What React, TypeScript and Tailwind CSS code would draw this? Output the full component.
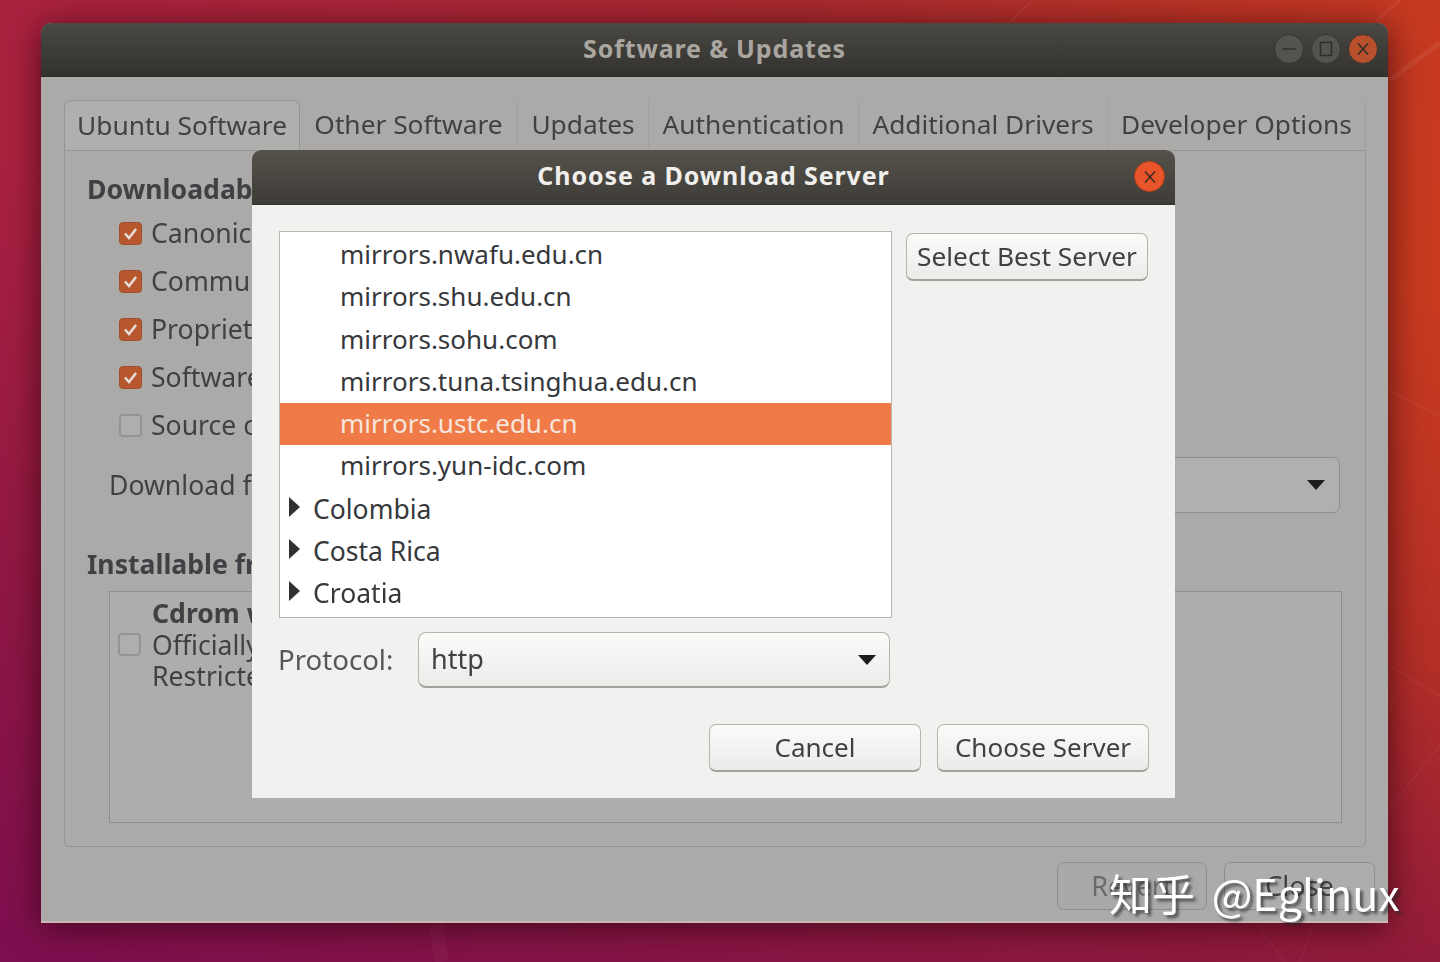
import React from "react";

const font = { fontFamily: '"Noto Sans", "Noto Sans CJK SC", sans-serif' };

function Check({ on }: { on?: boolean }) {
  return on ? (
    <span className="flex h-[23px] w-[23px] items-center justify-center rounded-[4px] border border-[#9c5030] bg-[#b9582f]">
      <svg width="17" height="17" viewBox="0 0 17 17">
        <path d="M3 8.5 L7 13 L14 4" fill="none" stroke="#e6e0db" strokeWidth="2.4" />
      </svg>
    </span>
  ) : (
    <span className="block h-[23px] w-[23px] rounded-[4px] border-2 border-[#949492] bg-[#aeaeac]" />
  );
}

function WinBtn({ kind }: { kind: "min" | "max" | "close" }) {
  const bg = kind === "close" ? "bg-[#b9502d]" : "bg-[#55534e]";
  return (
    <span className={`flex h-[30px] w-[30px] items-center justify-center rounded-full border border-[#36352f] ${bg}`}>
      <svg width="16" height="16" viewBox="0 0 16 16" fill="none" stroke="#2e2d29" strokeWidth="1.5">
        {kind === "min" && <path d="M1.5 8 H14.5" />}
        {kind === "max" && <rect x="2.5" y="1.5" width="11" height="13" />}
        {kind === "close" && <path d="M3 2.5 L13 13.5 M13 2.5 L3 13.5" />}
      </svg>
    </span>
  );
}

function Row({ label, on }: { label: string; on?: boolean }) {
  return (
    <div className="flex h-[48px] items-center gap-[9px] pl-[32px]">
      <Check on={on} />
      <span className="whitespace-nowrap">{label}</span>
    </div>
  );
}

function Caret() {
  return (
    <svg width="18" height="10" viewBox="0 0 18 10">
      <path d="M0 0 H18 L9 10 Z" fill="#1c1c1c" />
    </svg>
  );
}

function Server({ name, selected }: { name: string; selected?: boolean }) {
  return (
    <div className={`flex h-[42.25px] items-center pb-[2px] pl-[60px] text-[26px] ${selected ? "bg-[#f07a48] text-[#f6e6dc]" : ""}`}>{name}</div>
  );
}

function Country({ name }: { name: string }) {
  return (
    <div className="flex h-[42.25px] items-center text-[26.5px]">
      <svg className="ml-[9px] mb-[4px]" width="11" height="20" viewBox="0 0 11 20">
        <path d="M0 0 L11 10 L0 20 Z" fill="#2f3133" />
      </svg>
      <span className="ml-[13px]">{name}</span>
    </div>
  );
}

function DlgButton({ label, className }: { label: string; className: string }) {
  return (
    <div
      className={`flex h-[48px] items-center justify-center rounded-[7px] border border-[#b5b3ae] border-b-[2px] border-b-[#a3a19c] bg-gradient-to-b from-[#fbfbfa] to-[#ecebe9] pb-[2px] ${className}`}
    >
      {label}
    </div>
  );
}

const tabs: [string, string][] = [
  ["Other Software", "w-[218px]"],
  ["Updates", "w-[131px]"],
  ["Authentication", "w-[210px]"],
  ["Additional Drivers", "w-[249px]"],
  ["Developer Options", "w-[258px]"],
];

export default function App() {
  return (
    <div
      className="relative h-[962px] w-[1440px] overflow-hidden bg-[linear-gradient(100deg,#ab2140_0%,#a82a30_50%,#cf3e1c_100%)] text-[27px] leading-[30px] text-[#3f4144]"
      style={font}
    >
      <div className="absolute inset-0 bg-[linear-gradient(to_bottom,transparent_30%,#9e232e_100%)]" />
      <div className="absolute inset-0 bg-[linear-gradient(20deg,#7d0e50_0%,#7d0e5000_55%)]" />
      <svg className="absolute inset-0" width="1440" height="962" viewBox="0 0 1440 962">
        <g fill="none" stroke="#ffffff">
          <path d="M1390 80 L1440 43" strokeOpacity="0.07" strokeWidth="5" />
          <path d="M1388 390 L1440 417" strokeOpacity="0.04" strokeWidth="2" />
          <path d="M1388 665 L1440 696" strokeOpacity="0.04" strokeWidth="2" />
          <path d="M1388 810 L1440 745" strokeOpacity="0.04" strokeWidth="2" />
          <path d="M1010 22 L1033 0" strokeOpacity="0.06" strokeWidth="2" />
          <path d="M1377 20 L1400 0" strokeOpacity="0.06" strokeWidth="3" />
          <path d="M436 925 L442 962" strokeOpacity="0.03" strokeWidth="14" />
          <path d="M1258 925 L1285 962" strokeOpacity="0.04" strokeWidth="2" />
          <path d="M1313 925 L1300 962" strokeOpacity="0.04" strokeWidth="2" />
        </g>
      </svg>

      <div className="blur-[0.5px]">
        {/* main window */}
        <div className="absolute left-[41px] top-[23px] flex h-[900px] w-[1347px] flex-col overflow-hidden rounded-t-[10px] border-b-2 border-[#c9b9b5] bg-[#abaaa9] shadow-[0_4px_34px_rgba(40,0,10,0.7)]">
          <div className="relative flex h-[54px] shrink-0 items-center justify-center border-b border-[#2c2b28] bg-gradient-to-b from-[#4a4843] to-[#33322e] pb-[3px] text-[25px] font-bold tracking-[0.85px] text-[#a9a69f]">
            <span>Software &amp; Updates</span>
            <div className="absolute right-[10px] top-[11px] flex gap-[7px]">
              <WinBtn kind="min" />
              <WinBtn kind="max" />
              <WinBtn kind="close" />
            </div>
          </div>

          <div className="flex flex-1 flex-col pl-[23px] pr-[22px] pt-[23px]">
            <div className="flex h-[50px] shrink-0 pb-[2px] text-[26.3px]">
              <div className="-mb-[2px] flex w-[236px] items-center justify-center rounded-t-[7px] border border-b-0 border-[#949492] bg-[#afafad] pb-[2px]">
                Ubuntu Software
              </div>
              {tabs.map(([t, w]) => (
                <div key={t} className={`flex items-center justify-center border-r border-[#a0a09e] ${w}`}>
                  {t}
                </div>
              ))}
            </div>

            <div className="h-[697px] shrink-0 rounded-b-[5px] border border-[#959593] bg-[#abaaa9] pl-[22px] pr-[23px] pt-[23px] text-[26.6px]">
              <div className="whitespace-nowrap font-bold">Downloadable from the Internet</div>
              <div className="mt-[5px]">
                <Row label="Canonical-supported" on />
                <Row label="Community-maintained" on />
                <Row label="Proprietary drivers" on />
                <Row label="Software restricted" on />
                <Row label="Source code" />
              </div>
              <div className="mt-[8px] flex h-[56px] items-center pl-[22px]">
                <span className="whitespace-nowrap">Download from:</span>
                <div className="ml-auto mr-[2px] flex h-[56px] w-[560px] items-center justify-end rounded-[7px] border border-[#8f8f8d] bg-[#b0b0ae] pr-[14px]">
                  <Caret />
                </div>
              </div>
              <div className="mt-[36px] whitespace-nowrap font-bold">Installable from CD-ROM/DVD</div>
              <div className="ml-[22px] mt-[12px] flex h-[232px] border border-[#8f8f8d] bg-[#adadab] pt-[6px]">
                <div className="ml-[8px] mt-[35px]">
                  <Check />
                </div>
                <div className="ml-[11px] whitespace-nowrap leading-[31.5px]">
                  <div className="font-bold">Cdrom with Ubuntu</div>
                  <div>Officially supported</div>
                  <div>Restricted copyright</div>
                </div>
              </div>
            </div>

            <div className="-mr-[9px] mt-[15px] flex justify-end gap-[17px] text-[#6b6b6a]">
              <div className="flex h-[48px] w-[150px] items-center justify-center rounded-[7px] border border-[#8e8e8c] bg-[#a9a9a7]">Revert</div>
              <div className="flex h-[48px] w-[151px] items-center justify-center rounded-[7px] border border-[#8e8e8c] bg-[#adadab] text-[#3f4144]">Close</div>
            </div>
          </div>
        </div>

        {/* dialog */}
        <div className="absolute left-[252px] top-[150px] flex h-[648px] w-[923px] flex-col overflow-hidden rounded-t-[9px] bg-[#f2f1ef]">
          <div className="relative flex h-[55px] shrink-0 items-center justify-center border-b border-[#35342f] bg-gradient-to-b from-[#55524b] to-[#3e3c37] pb-[4px] text-[25px] font-bold tracking-[0.9px] text-[#f0efec]">
            <span>Choose a Download Server</span>
            <div className="absolute right-[10px] top-[11px] flex h-[31px] w-[31px] items-center justify-center rounded-full border border-[#b83f1c] bg-[#e8552a]">
              <svg width="16" height="16" viewBox="0 0 16 16" fill="none" stroke="#3a2a22" strokeWidth="1.5">
                <path d="M3 2.5 L13 13.5 M13 2.5 L3 13.5" />
              </svg>
            </div>
          </div>

          <div className="flex flex-1 flex-col pl-[27px] pt-[26px]">
            <div className="flex items-start gap-[14px]">
              <div className="h-[387px] w-[613px] shrink-0 border border-[#b8b7b3] bg-white pt-[2px] text-[#36383b]">
                <Server name="mirrors.nwafu.edu.cn" />
                <Server name="mirrors.shu.edu.cn" />
                <Server name="mirrors.sohu.com" />
                <Server name="mirrors.tuna.tsinghua.edu.cn" />
                <Server name="mirrors.ustc.edu.cn" selected />
                <Server name="mirrors.yun-idc.com" />
                <Country name="Colombia" />
                <Country name="Costa Rica" />
                <Country name="Croatia" />
              </div>
              <DlgButton label="Select Best Server" className="mt-[2px] w-[242px] text-[26.3px]" />
            </div>

            <div className="mt-[14px] flex h-[56px] items-center">
              <span className="-ml-px w-[140px] pb-[2px] text-[27.6px] text-[#55575a]">Protocol:</span>
              <div className="flex h-[56px] w-[472px] items-center justify-between rounded-[8px] border border-[#b5b3ae] border-b-[2px] border-b-[#a3a19c] bg-gradient-to-b from-[#fbfbfa] to-[#ecebe9] pl-[12px] pr-[13px]">
                <span className="pb-[2px]">http</span>
                <Caret />
              </div>
            </div>

            <div className="mt-[36px] flex justify-end gap-[16px] pr-[26px] text-[26px]">
              <DlgButton label="Cancel" className="w-[212px]" />
              <DlgButton label="Choose Server" className="w-[212px]" />
            </div>
          </div>
        </div>

        {/* watermark */}
        <div
          className="absolute left-[1109px] top-[862px] whitespace-nowrap text-[43px] leading-[60px] text-white [word-spacing:7px] [text-shadow:3px_3px_3px_rgba(40,40,40,0.7)]"
          style={{ fontFamily: '"Noto Sans CJK SC", "Noto Sans", sans-serif' }}
        >
          知乎 @Eglinux
        </div>
      </div>
    </div>
  );
}
